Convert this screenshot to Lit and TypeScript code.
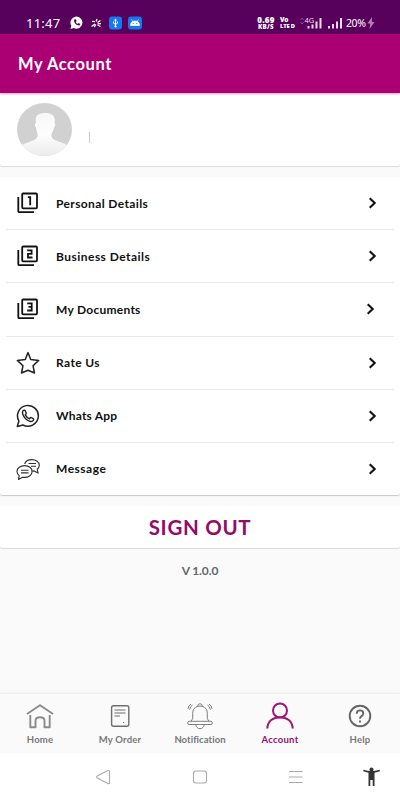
import { LitElement, html, css, svg } from "lit";

const numbered = (digit: unknown) => svg`<svg width="24" height="24" viewBox="0 0 24 24" fill="none" stroke="#111" stroke-width="1.800">
  <rect x="6.200" y="2.500" width="14.800" height="14.800" rx="1"/><path d="M2.300 6v14.200q0 1 1 1H18"/>${digit}</svg>`;

const icons = {
  one: numbered(svg`<path d="M11.800 6.200h2.400v8"/>`),
  two: numbered(svg`<path d="M11.200 6.400h4.400v3.400h-3.600v3.700h4.500"/>`),
  three: numbered(svg`<path d="M11.200 6.300h4.500v7.200h-4.500M12.500 9.900h3.200"/>`),
  star: svg`<svg width="24" height="24" viewBox="0 0 24 24" fill="none" stroke="#222" stroke-width="1.500" stroke-linejoin="round"><path d="M12 1.600l2.700 7 8 .8-5.700 5.300 1.500 7.300-6.500-2.700L5.500 22 7 14.700 1.300 9.400l8-.8z"/></svg>`,
  whatsapp: svg`<svg width="24" height="24" viewBox="0 0 24 24" fill="none" stroke="#222" stroke-width="1.500" stroke-linejoin="round"><path d="M1.300 22.500l1.600-5.500A10.400 10.400 0 1 1 7 21z"/><path d="M8 6.200c-1.700.6-1.800 2.500-1.100 4.300 1.100 2.900 3.900 5.800 6.900 6.800 1.800.6 3.700-.2 4-2.100.1-.5-2.700-2-3.200-1.700l-1.200 1.300c-1.800-.7-3.200-2.100-4.100-3.900l.9-1.200c.3-.6-1.100-3.500-1.500-3.600z" stroke-width="1.400"/></svg>`,
  message: svg`<svg width="24" height="24" viewBox="0 0 24 24" fill="none" stroke="#333" stroke-width="1.150" stroke-linejoin="round"><path d="M8.700 7c.7-2.700 3.600-4.400 7.100-4.400 4.200 0 7.500 2.300 7.500 5.600 0 1.700-.9 3-2.100 4l.9 3.900-3.900-2.200-2 .2"/><path d="M8.600 8.600c4.200 0 7.500 2.600 7.500 5.900s-3.300 5.900-7.500 5.900l-2-.2L2.500 22.500l.7-3.900C1.800 17.500 1 16.100 1 14.500c0-3.300 3.400-5.900 7.600-5.900zM5 13.200h7.500M5 15.900h7.500M12.500 6.500h7.500M15 9.200h5"/></svg>`,
  chevron: svg`<svg width="10" height="14" viewBox="0 0 10 14" fill="none" stroke="#111" stroke-width="2.100"><path d="M1.700 2.200l5 4.800-5 4.800"/></svg>`,
  home: svg`<svg width="30" height="30" viewBox="0 0 30 30" fill="none" stroke="#8b8b8b" stroke-width="1.900" stroke-linejoin="round"><path d="M2 13L15 4.200l13 8.800M5.300 14v12.200h5.200v-6.500q0-3.500 4.500-3.500t4.500 3.500v6.500h5.200V14"/></svg>`,
  order: svg`<svg width="30" height="30" viewBox="0 0 30 30" fill="none" stroke="#6e6e6e" stroke-width="1.200"><rect x="6.600" y="4.700" width="17.200" height="20.500" rx="2" stroke-width="1.400"/><path d="M9.500 9h11M9.500 12h11M9.500 15h5.500M18 21.500h1.200"/></svg>`,
  bell: svg`<svg width="30" height="30" viewBox="0 0 30 30" fill="none" stroke="#707070" stroke-width=".9"><path d="M12.900 5.300v-1q0-1.500 2.100-1.500t2.100 1.500v1q5.200 1.300 5.200 7v5.500l1.900 2.500H26q1.300.2 1.300 1.600T26 23.500H4q-1.300-.2-1.300-1.600T4 20.300h1.800l1.900-2.500v-5.500q0-5.700 5.200-7q2.100-.5 4.200 0M5.800 20.300h18.400M10.700 23.500q.8 4.200 4.300 4.200t4.300-4.200M7.500 4Q5 5.500 4.600 8.800M6 3Q3.200 4.500 2.900 8M22.500 4q2.500 1.500 2.900 4.800M24 3q2.800 1.500 3.100 5"/></svg>`,
  account: svg`<svg width="30" height="30" viewBox="0 0 30 30" fill="none" stroke="#9d1773" stroke-width="2"><circle cx="15" cy="9.500" r="7"/><path d="M2.300 27.500C2.700 20.200 8 16.200 15 16.200s12.300 4 12.700 11.300"/></svg>`,
  help: svg`<svg width="30" height="30" viewBox="0 0 30 30" fill="none" stroke="#666" stroke-width="1.900"><circle cx="15" cy="15" r="10.300"/><path d="M11.700 12.700q0-3.300 3.300-3.300t3.300 3q0 1.500-1.700 2.700T15 17.500v.3M15 19.400v2"/></svg>`,
};

const rows = [
  ["one", "Personal Details"], ["two", "Business Details"], ["three", "My Documents"],
  ["star", "Rate Us"], ["whatsapp", "Whats App"], ["message", "Message"],
] as const;

const tabs = [
  ["home", "Home"], ["order", "My Order"], ["bell", "Notification"], ["account", "Account"], ["help", "Help"],
] as const;

class AppRoot extends LitElement {
  static styles = css`
    :host { display: flex; flex-direction: column; width: 400px; height: 800px; overflow: hidden; background: #fafafa; font-family: Lato, "Open Sans", sans-serif; color: #111; }
    * { box-sizing: border-box; }
    svg { display: block; flex: none; }
    .status { height: 34px; flex: none; background: #57005c; color: #fff; display: flex; align-items: flex-start; padding: 15px 25px 0 26px; font-family: "Noto Sans", sans-serif; }
    .clock { font-size: 13px; line-height: 16px; width: 44px; letter-spacing: .25px; }
    .left { margin-top: 1px; }
    .net { margin-left: auto; display: flex; }
    .rate { font: 700 8px/8px "Noto Sans", sans-serif; width: 20px; margin-top: 1px; letter-spacing: .3px; display: flex; flex-direction: column; align-items: center; }
    .rate b + b { font-size: 6.200px; line-height: 6px; }
    .volte { font: 800 6.500px/7px "Open Sans", sans-serif; width: 16px; margin: 1px 0 0 4px; white-space: nowrap; letter-spacing: -.2px; }
    .volte b { display: block; }
    .volte b + b { font-size: 5.800px; line-height: 6px; }
    .signal { margin-left: 4px; }
    .battery { font-size: 10.500px; line-height: 16px; width: 19px; margin-left: 3px; white-space: nowrap; letter-spacing: -.4px; }
    .bolt { margin: 2px 0 0 2px; }
    .bar { height: 59px; flex: none; background: #ab0073; color: #fff; padding: 18px; font-size: 16.500px; line-height: 24px; font-weight: 700; letter-spacing: .58px; box-shadow: 0 1px 2px #ab007366; z-index: 1; }
    .card { background: #fff; border-radius: 2px; box-shadow: 0 1px 1px #0002; flex: none; }
    .profile { height: 73px; display: flex; padding: 10px 17px; }
    .caret { width: 1px; height: 11px; background: #ccc; margin: 29px 0 0 17px; }
    .list { height: 318px; margin-top: 11px; padding: 0 6px; box-shadow: 0 1px 1px #0003; }
    .row { height: 53.200px; display: flex; align-items: center; padding: 0 16px 0 10px; border-bottom: 1px solid #e9e9e9; }
    .row:last-child { border: 0; height: 52px; }
    .label { font-size: 12px; font-weight: 700; margin-left: 16px; flex: 1; letter-spacing: .38px; }
    .row:nth-child(2) .label { letter-spacing: .47px; }
    .row:nth-child(3) .label { letter-spacing: .26px; }
    .row:nth-child(5) .label { letter-spacing: .2px; }
    .row:nth-child(6) .label { letter-spacing: .5px; }
    .row:nth-child(3) { padding-right: 18px; }
    .signout { height: 42px; margin-top: 11px; text-align: center; color: #920b68; font-size: 20.500px; letter-spacing: .7px; font-weight: 700; line-height: 43px; }
    .version { font-size: 12px; line-height: 16px; text-align: center; color: #666; margin-top: 15px; font-weight: 700; letter-spacing: -.1px; }
    .tabs { margin-top: auto; height: 59px; flex: none; display: grid; grid-template-columns: repeat(5, 80px); box-shadow: 0 -1px 2px #0001; }
    .tab { display: flex; flex-direction: column; align-items: center; padding-top: 7px; color: #777; font-size: 9.500px; font-weight: 700; line-height: 14px; letter-spacing: .2px; }
    .tab span { margin-top: 2px; white-space: nowrap; }
    .tab.bell { letter-spacing: .07px; }
    .tab.account { color: #92106b; letter-spacing: .27px; }
    .system { height: 47px; flex: none; background: #fff; }
  `;

  render() {
    return html`
      <div class="status">
        <div class="clock">11:47</div>
        <svg class="left" width="73" height="14" viewBox="0 0 73 14">
          <path d="M.5 13l.8-3.300A6 6 0 1 1 3.800 12z" fill="#fff"/><path d="M4.200 3.500c-.7 3 2 6 5.300 6l.8-1.500-1.800-1-1 1C6.500 7.500 6 6.800 5.800 6l.8-.8-.7-1.900z" fill="#57005c"/>
          <path d="M22 5.300l3 .4M27 3l-.8 2.500M30.500 4.500l-3 2M21.500 10.500l3.500-2.500M25.800 8.500l-1.600 2.700M27.500 7.800l3.500-.2M27.500 9l3 1.500" stroke="#fff" stroke-width="1.300"/>
          <rect x="39" y=".5" width="13" height="13" rx="3" fill="#1677ee"/><path d="M45.500 3.500v7M43.500 5.500v1.700l2 1.300 2-1.300V5.500" stroke="#fff" fill="none"/><circle cx="45.500" cy="10.500" r="1.100" fill="#fff"/><path d="M45.500 2.500l1.500 2h-3z" fill="#fff"/>
          <rect x="58" y=".5" width="14" height="13" rx="3" fill="#1677ee"/><path d="M60.500 9.500q.2-4.500 4.500-4.500t4.500 4.500zM61.500 3.500l1.500 2.500M68.500 3.500L67 6" fill="#fff" stroke="#fff" stroke-width=".7"/><path d="M62.700 7.500h1M66.300 7.500h1" stroke="#1677ee"/>
        </svg>
        <div class="net">
          <div class="rate"><b>0.69</b><b>KB/S</b></div>
          <div class="volte"><b>Vo</b><b>LTE D</b></div>
          <svg class="signal" width="43" height="14" viewBox="2 0 43 14" fill="#eddcee"><path d="M2.500 5L4 3l1.500 2M2.500 7L4 9l1.500-2" fill="none" stroke="#98659c" stroke-width=".7"/><text x="6.500" y="8" font-size="7.500" font-family="Noto Sans">4G</text><path d="M9.500 11h2v2.500h-2zM13.500 9.500h2v4h-2zM17.500 6.500h2v7h-2zM21.500 3h2v10.500h-2zM30 11h2v2.500h-2zM34 9h2v4.500h-2zM38 6.500h2v7h-2zM42 3h2v10.500h-2z"/></svg>
          <div class="battery">20%</div>
          <svg class="bolt" width="8" height="12" viewBox="0 0 8 12"><path d="M5 0L.5 6.500h2.800L2.500 12 7.500 5H4.800z" fill="#b184b4"/></svg>
        </div>
      </div>
      <div class="bar"><span class="title">My Account</span></div>
      <div class="card profile">
        <svg width="55" height="53" viewBox="0 0 55 53">
          <defs><clipPath id="c"><ellipse cx="27.500" cy="26.500" rx="27.500" ry="26.500"/></clipPath><linearGradient id="g" x2="0" y2="1"><stop stop-color="#f8f8f8"/><stop offset=".5" stop-color="#fdfdfd"/><stop offset="1" stop-color="#ebebeb"/></linearGradient></defs>
          <g clip-path="url(#c)"><path fill="#d1d1d1" d="M0 0h55v53H0z"/><path fill="url(#g)" d="M19 20c-1.500-7 2-10 9-10s11 3 9.500 10c1.200.3.700 3.500-.5 4.500-.6 3.500-2.300 5.500-2.700 7 .2 4 2 5 7.200 7 6 2 9.500 3 13.500 8v7H0v-7c4-5 7.500-6 13.500-8 5.200-2 7-3 7.200-7-.2-1.500-1.400-4-1.700-7-1.300-1-1.500-4.200 0-4.500z"/></g>
        </svg>
        <div class="caret"></div>
      </div>
      <div class="card list">
        ${rows.map(([icon, label]) => html`<div class="row">${icons[icon]}<div class="label"><span>${label}</span></div>${icons.chevron}</div>`)}
      </div>
      <div class="card signout"><span>SIGN OUT</span></div>
      <div class="version"><span>V 1.0.0</span></div>
      <div class="tabs">
        ${tabs.map(([icon, label]) => html`<div class="tab ${icon}">${icons[icon]}<span>${label}</span></div>`)}
      </div>
      <div class="system">
        <svg width="400" height="47" viewBox="0 0 400 47" fill="none" stroke="#aaa" stroke-width="1.100"><path d="M97.300 23q-1.400 1 0 2l10.500 5.600q1.700.5 1.700-1.200V18.800q0-1.700-1.700-1.200z"/><rect x="193.500" y="18" width="13" height="12" rx="2.500"/><path d="M289 18.500h13.500M289 24h13.500M289 29.500h13.500"/><g fill="#333" stroke="none"><circle cx="371.500" cy="16.500" r="2"/><path d="M363.200 18.200l.3-1.400q8 2.500 16 0l.5 1.400-5.500 1.500V33h-1.800v-6h-2.400v6h-1.800V19.700z"/></g></svg>
      </div>`;
  }
}

customElements.define("app-root", AppRoot);
